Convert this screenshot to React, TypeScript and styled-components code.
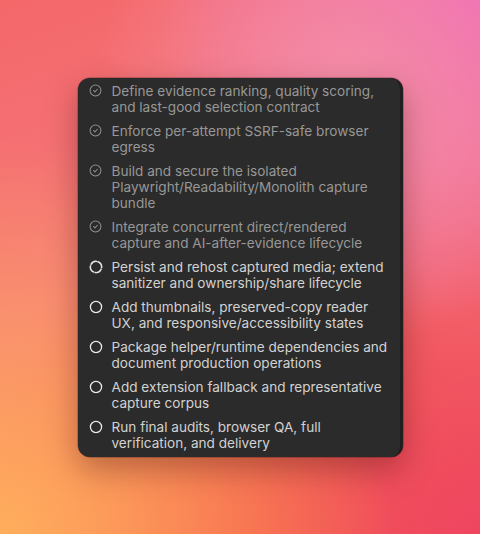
import styled, { createGlobalStyle } from "styled-components";

type Status = "done" | "active" | "todo";

const tasks: { title: string; status: Status }[] = [
  { title: "Define evidence ranking, quality scoring, and last-good selection contract", status: "done" },
  { title: "Enforce per-attempt SSRF-safe browser egress", status: "done" },
  { title: "Build and secure the isolated Playwright/Readability/Monolith capture bundle", status: "done" },
  { title: "Integrate concurrent direct/rendered capture and AI-after-evidence lifecycle", status: "done" },
  { title: "Persist and rehost captured media; extend sanitizer and ownership/share lifecycle", status: "active" },
  { title: "Add thumbnails, preserved-copy reader UX, and responsive/accessibility states", status: "todo" },
  { title: "Package helper/runtime dependencies and document production operations", status: "todo" },
  { title: "Add extension fallback and representative capture corpus", status: "todo" },
  { title: "Run final audits, browser QA, full verification, and delivery", status: "todo" },
];

const GlobalStyle = createGlobalStyle`
  html, body {
    margin: 0;
    padding: 0;
  }
  body {
    font-family: Inter, "Noto Sans", sans-serif;
    -webkit-font-smoothing: antialiased;
  }
`;

const Backdrop = styled.div`
  width: 480px;
  height: 534px;
  display: flex;
  align-items: center;
  justify-content: center;
  background:
    radial-gradient(circle at 72% 18%, rgba(244, 146, 170, 0.9) 0%, rgba(244, 146, 170, 0) 45%),
    radial-gradient(circle at 100% 0%, #ef69b8 0%, rgba(239, 105, 184, 0) 45%),
    radial-gradient(circle at 0% 100%, #ffae5c 0%, rgba(255, 174, 92, 0) 55%),
    radial-gradient(circle at 100% 100%, #ee4560 0%, rgba(238, 69, 96, 0) 55%),
    radial-gradient(circle at 55% 100%, #f8603f 0%, rgba(248, 96, 63, 0) 50%),
    linear-gradient(160deg, #f4686a 0%, #f5787c 45%, #f66a58 100%);
`;

const Panel = styled.div`
  width: 325px;
  height: 379px;
  box-sizing: border-box;
  background: #2b2b2b;
  border-right: 3px solid #1f1f1f;
  border-radius: 12px;
  box-shadow: 0 12px 32px rgba(60, 10, 10, 0.35), 0 0 0 0.5px rgba(0, 0, 0, 0.4);
  padding: 5px 9px 6px 11px;
  display: flex;
  flex-direction: column;
  gap: 8px;
  overflow: hidden;
`;

const Row = styled.div`
  display: flex;
  align-items: flex-start;
  gap: 9px;
`;

const IconSlot = styled.span`
  flex: 0 0 14px;
  height: 16px;
  display: flex;
  align-items: center;
  justify-content: center;
`;

const Label = styled.span<{ $done: boolean }>`
  flex: 1;
  font-size: 13.6px;
  line-height: 16px;
  color: ${(p) => (p.$done ? "#979797" : "#d2d2d2")};
`;

const StatusIcon = ({ status }: { status: Status }) => {
  if (status === "done") {
    return (
      <svg width="13" height="13" viewBox="0 0 24 24" fill="none" stroke="#8f8f8f" strokeWidth="1.9" strokeLinecap="round" strokeLinejoin="round">
        <circle cx="12" cy="12" r="10" />
        <path d="m8.5 12.3 2.4 2.4 4.6-5" />
      </svg>
    );
  }
  if (status === "active") {
    // spinner ring: faint segments with thin gaps
    return (
      <svg width="14" height="14" viewBox="0 0 24 24" fill="none" stroke="#e4e4e4" strokeWidth="2.4" strokeLinecap="butt">
        <circle cx="12" cy="12" r="9.6" stroke="#8a8a8a" />
        <circle cx="12" cy="12" r="9.6" strokeDasharray="13 2" transform="rotate(-70 12 12)" />
      </svg>
    );
  }
  return (
    <svg width="14" height="14" viewBox="0 0 24 24" fill="none" stroke="#ececec" strokeWidth="2.2">
      <circle cx="12" cy="12" r="9.6" />
    </svg>
  );
};

export default function App() {
  return (
    <>
      <GlobalStyle />
      <Backdrop>
        <Panel>
          {tasks.map((t) => (
            <Row key={t.title}>
              <IconSlot>
                <StatusIcon status={t.status} />
              </IconSlot>
              <Label $done={t.status === "done"}>{t.title}</Label>
            </Row>
          ))}
        </Panel>
      </Backdrop>
    </>
  );
}
